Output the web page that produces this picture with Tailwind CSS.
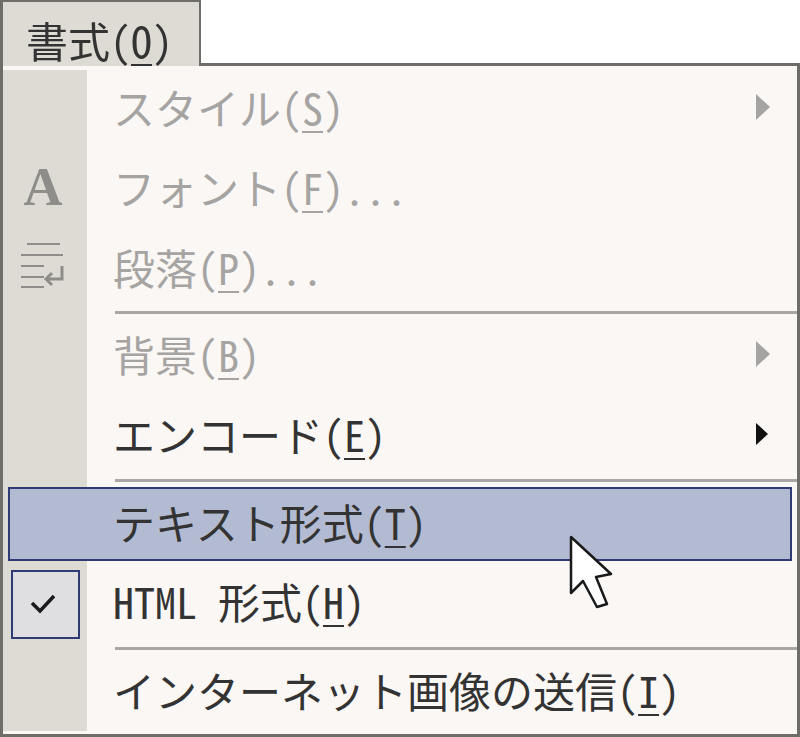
<!DOCTYPE html>
<html lang="ja">
<head>
    <meta charset="UTF-8">
    <title>書式メニュー</title>
    <script src="https://cdn.jsdelivr.net/npm/@tailwindcss/browser@4"></script>
</head>
<body class="bg-white overflow-hidden">
<div class="relative w-[800px] h-[737px] font-['Noto_Sans_CJK_JP',sans-serif] text-[42px] leading-none text-[#333333] [font-feature-settings:'hwid'] blur-[0.7px]">

    <!-- menu bar tab -->
    <div class="relative z-10 w-[201px] h-[66px] pl-[23px] pt-[17px] bg-[#dedbd5] border-t-2 border-l-[3px] border-r-2 border-[#6f6d68]">
        <span>書式(<span class="underline decoration-2 underline-offset-[6px]">O</span>)</span>
    </div>

    <!-- dropdown -->
    <div class="flex flex-col -mt-[3px] w-[800px] h-[674px] bg-[#faf7f5] border-[3px] border-[#6f6d68]">
        <div class="relative flex-1">
            <!-- icon gutter -->
            <div class="absolute left-0 top-[4px] bottom-[3px] w-[84px] bg-[#dedbd5]"></div>

            <div class="relative flex flex-col pt-[1px]">
                <div class="flex items-center h-[80px] text-[#a6a4a2]">
                    <div class="w-[84px]"></div>
                    <div class="flex-1 pl-[26px]">スタイル(<span class="underline decoration-2 underline-offset-[6px]">S</span>)</div>
                    <svg class="mr-[26px]" width="16" height="28" viewBox="0 0 16 28"><path d="M1 1 L15 14 L1 27 Z" fill="#a6a4a2"/></svg>
                </div>
                <div class="flex items-center h-[80px] text-[#a6a4a2]">
                    <div class="w-[84px] flex justify-center pr-[4px] font-['Liberation_Serif',serif] font-bold text-[54px] text-[#8f8d8a]">A</div>
                    <div class="flex-1 pl-[26px]">フォント(<span class="underline decoration-2 underline-offset-[6px]">F</span>)...</div>
                </div>
                <div class="flex items-center h-[80px] text-[#a6a4a2]">
                    <div class="w-[84px] flex justify-center pr-[6px]">
                        <svg class="mt-[-2px]" width="48" height="50" viewBox="0 0 48 50" fill="none" stroke="#8f8d8a" stroke-width="2">
                            <path d="M9 3 H42 M3 14 H45 M3 25 H26 M3 36 H26 M3 46 H26"/>
                            <path d="M44 25 V38 H28 M34 32 L28 38 L34 44" stroke-width="3"/>
                        </svg>
                    </div>
                    <div class="flex-1 pl-[26px]">段落(<span class="underline decoration-2 underline-offset-[6px]">P</span>)...</div>
                </div>

                <div class="flex items-start h-[7px] pt-[4px]">
                    <div class="ml-[112px] flex-1 h-[3px] bg-[#a9a7a5]"></div>
                </div>

                <div class="flex items-center h-[80px] text-[#a6a4a2]">
                    <div class="w-[84px]"></div>
                    <div class="flex-1 pl-[26px]">背景(<span class="underline decoration-2 underline-offset-[6px]">B</span>)</div>
                    <svg class="mr-[26px]" width="16" height="28" viewBox="0 0 16 28"><path d="M1 1 L15 14 L1 27 Z" fill="#a6a4a2"/></svg>
                </div>
                <div class="flex items-center h-[80px]">
                    <div class="w-[84px]"></div>
                    <div class="flex-1 pl-[26px]">エンコード(<span class="underline decoration-2 underline-offset-[6px]">E</span>)</div>
                    <svg class="mr-[28px]" width="14" height="24" viewBox="0 0 14 24"><path d="M1 1 L13 12 L1 23 Z" fill="#111"/></svg>
                </div>

                <div class="flex items-start h-[7px] pt-[5px]">
                    <div class="ml-[112px] flex-1 h-[3px] bg-[#a9a7a5]"></div>
                </div>

                <!-- highlighted row -->
                <div class="flex items-start h-[80px] pt-[6px] px-[5px]">
                    <div class="flex items-center w-full h-[74px] pl-[103px] pb-[5px] bg-[#b3bbd2] border-2 border-[#2f3b72]">
                        <span>テキスト形式(<span class="underline decoration-2 underline-offset-[6px]">T</span>)</span>
                    </div>
                </div>

                <div class="flex items-center h-[80px]">
                    <div class="w-[84px] pl-[8px] mt-[6px]">
                        <div class="flex items-center justify-center w-[69px] h-[69px] pr-[6px] bg-[#dfdfe2] border-2 border-[#2f3b72]">
                            <svg width="26" height="22" viewBox="0 0 26 22" fill="none" stroke="#1a1a1a" stroke-width="3.5"><path d="M2 10 L10 18 L24 3"/></svg>
                        </div>
                    </div>
                    <div class="flex-1 pl-[26px]">HTML 形式(<span class="underline decoration-2 underline-offset-[6px]">H</span>)</div>
                </div>

                <div class="flex items-start h-[7px] pt-[6px]">
                    <div class="ml-[112px] flex-1 h-[3px] bg-[#a9a7a5]"></div>
                </div>

                <div class="flex items-center h-[80px] pt-[4px]">
                    <div class="w-[84px]"></div>
                    <div class="flex-1 pl-[26px]">インターネット画像の送信(<span class="underline decoration-2 underline-offset-[6px]">I</span>)</div>
                </div>
            </div>
        </div>
    </div>

    <!-- mouse cursor -->
    <svg class="absolute left-[566px] top-[533px]" width="50" height="78" viewBox="0 0 50 78">
        <path d="M5 4 V60 L17 48 L31 74 L41 71 L30 44 L45 41 Z" fill="#fff" stroke="#1a1a1a" stroke-width="2.5" stroke-linejoin="round"/>
    </svg>
</div>
</body>
</html>
